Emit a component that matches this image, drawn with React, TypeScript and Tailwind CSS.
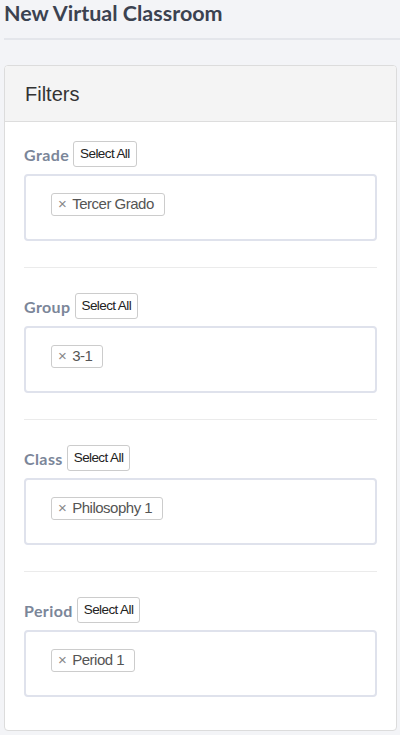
const filters = [
  { label: "Grade", value: "Tercer Grado" },
  { label: "Group", value: "3-1" },
  { label: "Class", value: "Philosophy 1" },
  { label: "Period", value: "Period 1" },
];

function FilterField({ label, value }: { label: string; value: string }) {
  return (
    <div className="flex flex-col">
      <div className="flex h-[26px] items-center gap-[4px]">
        <span className="pt-[2px] font-['Lato',sans-serif] text-[16px] font-bold tracking-[0.4px] text-[#7b8699]">
          {label}
        </span>
        <button
          type="button"
          className="h-[26px] rounded-[3px] border border-[#cccccc] bg-white px-[6px] font-['Liberation_Sans',Arial,sans-serif] text-[13.5px] tracking-[-0.6px] text-[#222]"
        >
          Select All
        </button>
      </div>
      <div className="mt-[7px] h-[67px] rounded-[4px] border-2 border-[#dfe2ec] bg-white pl-[25px] pt-[15px]">
        <span className="inline-flex h-[23px] items-center gap-[6px] rounded-[3px] border border-[#cccccc] pl-[6px] pr-[10px] font-['Liberation_Sans',Arial,sans-serif] text-[15px] tracking-[-0.5px] text-[#555]">
          <span className="text-[#888]">×</span>
          {value}
        </span>
      </div>
    </div>
  );
}

export default function App() {
  return (
    <div className="min-h-[735px] bg-[#f3f4f7] pt-[1px]">
      <h1 className="px-[4px] font-['Lato',sans-serif] text-[21.5px] font-bold leading-[24px] text-[#3b4250]">
        New Virtual Classroom
      </h1>
      <div className="ml-[4px] mt-[13px] h-[2px] bg-[#e4e6eb]" />
      <div className="ml-[4px] mr-[3px] mt-[25px] overflow-hidden rounded-[4px] border border-[#dcdcdc] bg-white">
        <div className="flex h-[56px] items-center border-b border-[#dddddd] bg-[#f4f4f4] px-[20px] font-['Liberation_Sans',Arial,sans-serif] text-[20px] text-[#333]">
          Filters
        </div>
        <div className="flex flex-col px-[19px] pb-[33px] pt-[19px]">
          {filters.map((f, i) => (
            <div key={f.label} className="flex flex-col">
              {i > 0 && <div className="mb-[25px] mt-[26px] h-px bg-[#ebebeb]" />}
              <FilterField label={f.label} value={f.value} />
            </div>
          ))}
        </div>
      </div>
    </div>
  );
}
